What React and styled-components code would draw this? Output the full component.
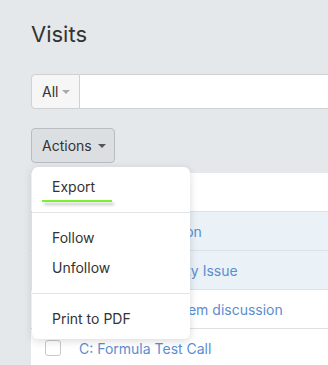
import React from 'react'
import styled, { createGlobalStyle } from 'styled-components'

const GlobalStyle = createGlobalStyle`
  html, body {
    margin: 0;
    padding: 0;
    background: #e5e8eb;
    font-family: Inter, "Noto Sans", sans-serif;
    color: #333;
    overflow: hidden;
  }
`

const Page = styled.div`
  padding: 20px 0 0 31px;
  height: 345px;
`

const Title = styled.h1`
  margin: 0;
  font-size: 22px;
  font-weight: 400;
  line-height: 28px;
  color: #333;
`

const SearchGroup = styled.div`
  display: flex;
  margin-top: 26px;
  height: 35px;
`

const FilterButton = styled.button`
  display: flex;
  align-items: center;
  gap: 4px;
  width: 49px;
  padding: 0 0 0 10px;
  background: #f6f6f6;
  border: 1px solid #cfd2d5;
  border-radius: 4px 0 0 4px;
  font: inherit;
  font-size: 14px;
  color: #333;
`

const SearchInput = styled.div`
  flex: 1;
  background: #fff;
  border: 1px solid #cfd2d5;
  border-left: none;
  border-right: none;
`

const Caret = styled.span`
  display: inline-block;
  width: 0;
  height: 0;
  border-left: 4px solid transparent;
  border-right: 4px solid transparent;
  border-top: 4px solid ${p => p.$color || '#555'};
`

const ActionsWrap = styled.div`
  position: relative;
  margin-top: 19px;
`

const ActionsButton = styled.button`
  display: flex;
  align-items: center;
  gap: 6px;
  width: 84px;
  height: 35px;
  padding: 0 10px;
  background: #dcdfe2;
  border: 1px solid #b9bdc1;
  border-radius: 4px;
  font: inherit;
  font-size: 14px;
  color: #333;
`

const Panel = styled.div`
  margin-top: 10px;
  background: #fff;
`

const Row = styled.div`
  display: flex;
  align-items: center;
  height: 38px;
  border-bottom: 1px solid #dde1e4;
  background: ${p => (p.$selected ? '#eaf2f7' : '#fff')};
`

const Check = styled.span`
  width: 14px;
  height: 14px;
  margin: 0 18px 0 14px;
  border: 1px solid #c6c9cc;
  border-radius: 3px;
  background: #fff;
`

const Link = styled.a`
  font-size: 14px;
  color: #5b8dd2;
  text-decoration: none;
  white-space: nowrap;
`

const Menu = styled.div`
  position: absolute;
  top: 39px;
  left: 1px;
  width: 158px;
  padding: 5px 0;
  background: #fff;
  border-radius: 6px;
  box-shadow: 0 2px 8px rgba(0, 0, 0, 0.15);
  z-index: 2;
`

const Item = styled.div`
  position: relative;
  height: 30px;
  line-height: 30px;
  padding: 0 20px;
  font-size: 14px;
  color: #333;
`

const Underline = styled.span`
  position: absolute;
  left: 10px;
  top: 28px;
  width: 70px;
  height: 2px;
  background: #7cf02a;
  box-shadow: 2px 3px 3px rgba(0, 0, 0, 0.25);
`

const Divider = styled.div`
  height: 1px;
  margin: 10px 0;
  background: #e2e5e8;
`

const rows = [
  { title: 'Sales Presentation', selected: true },
  { title: 'A: Product Quality Issue', selected: true },
  { title: 'B: Ticketing system discussion' },
  { title: 'C: Formula Test Call' }
]

const App = () => {
  return (
    <>
      <GlobalStyle />
      <Page>
        <Title>Visits</Title>
        <SearchGroup>
          <FilterButton>
            All <Caret $color='#aaa' />
          </FilterButton>
          <SearchInput />
        </SearchGroup>
        <ActionsWrap>
          <ActionsButton>
            Actions <Caret />
          </ActionsButton>
          <Menu>
            <Item>
              Export
              <Underline />
            </Item>
            <Divider />
            <Item>Follow</Item>
            <Item>Unfollow</Item>
            <Divider />
            <Item>Print to PDF</Item>
          </Menu>
          <Panel>
            <Row />
            {rows.map(r => (
              <Row key={r.title} $selected={r.selected}>
                <Check />
                <Link>{r.title}</Link>
              </Row>
            ))}
          </Panel>
        </ActionsWrap>
      </Page>
    </>
  )
}

export default App
